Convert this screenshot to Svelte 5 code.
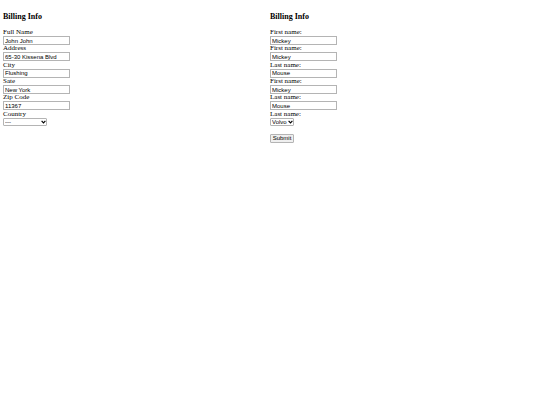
<script>
  let billing = $state([
    { id: 'fullname', label: 'Full Name', value: 'John John' },
    { id: 'address', label: 'Address', value: '65-30 Kissena Blvd' },
    { id: 'city', label: 'City', value: 'Flushing' },
    { id: 'state', label: 'Sate', value: 'New York' },
    { id: 'zip', label: 'Zip Code', value: '11367' }
  ]);

  let names = $state([
    { id: 'first1', label: 'First name:', value: 'Mickey' },
    { id: 'first2', label: 'First name:', value: 'Mickey' },
    { id: 'last1', label: 'Last name:', value: 'Mouse' },
    { id: 'first3', label: 'First name:', value: 'Mickey' },
    { id: 'last2', label: 'Last name:', value: 'Mouse' }
  ]);

  let country = $state('');
  let car = $state('volvo');

  const handleSubmit = (event) => {
    event.preventDefault();
  };
</script>

{#snippet arrow()}
  <svg class="arrow" viewBox="0 0 5 4" aria-hidden="true">
    <path d="M0.6 0.9 L2.5 2.8 L4.4 0.9" fill="none" stroke="#000" stroke-width="1.2" />
  </svg>
{/snippet}

<main class="columns">
  <form onsubmit={handleSubmit}>
    <h3>Billing Info</h3>
    <div class="fields">
      {#each billing as field (field.id)}
        <div class="field">
          <label for={field.id}>{field.label}</label>
          <input type="text" id={field.id} bind:value={field.value}>
        </div>
      {/each}
      <div class="field">
        <label for="country">Country</label>
        <div class="select wide">
          <select id="country" bind:value={country}>
            <option value="">---</option>
            <option value="us">United States</option>
          </select>
          {@render arrow()}
        </div>
      </div>
    </div>
  </form>

  <form onsubmit={handleSubmit}>
    <h3>Billing Info</h3>
    <div class="fields">
      {#each names as field (field.id)}
        <div class="field">
          <label for={field.id}>{field.label}</label>
          <input type="text" id={field.id} bind:value={field.value}>
        </div>
      {/each}
      <div class="field">
        <label for="car">Last name:</label>
        <div class="select">
          <select id="car" bind:value={car}>
            <option value="volvo">Volvo</option>
            <option value="saab">Saab</option>
          </select>
          {@render arrow()}
        </div>
      </div>
    </div>
    <button type="submit">Submit</button>
  </form>
</main>

<style>
  :global(body) {
    background: #fff;
    color: #000;
  }

  .columns {
    display: grid;
    grid-template-columns: 1fr 1fr;
    padding: 12px 3px;
    font-family: "Liberation Serif", "Times New Roman", serif;
    font-size: 7px;
    line-height: 7px;
  }

  h3 {
    margin: 0 0 8px;
    font-size: 8px;
    line-height: 9px;
  }

  .fields {
    display: grid;
    grid-auto-rows: 1fr;
    min-height: 98px;
  }

  .field {
    display: flex;
    flex-direction: column;
    align-items: flex-start;
  }

  input,
  select,
  button {
    box-sizing: border-box;
    margin: 0;
    border: 1px solid #b4b4b4;
    border-radius: 0;
    color: #000;
    font-family: "Liberation Sans", Arial, sans-serif;
    font-size: 6px;
    line-height: 7px;
  }

  input {
    width: 67px;
    height: 9px;
    padding: 0 1px;
    background: #fff;
  }

  .select {
    display: grid;
    align-items: center;
    width: 24px;
  }

  .wide {
    width: 44px;
  }

  select,
  .arrow {
    grid-area: 1 / 1;
  }

  select {
    width: 100%;
    height: 8px;
    padding: 0 1px;
    background: #fff;
    border-radius: 1px;
    line-height: 6px;
    appearance: none;
  }

  .arrow {
    justify-self: end;
    width: 5px;
    height: 4px;
    margin-right: 1px;
    pointer-events: none;
  }

  button {
    display: block;
    width: 24px;
    height: 9px;
    margin-top: 7px;
    padding: 0;
    background: #efefef;
    border-radius: 1px;
  }
</style>
